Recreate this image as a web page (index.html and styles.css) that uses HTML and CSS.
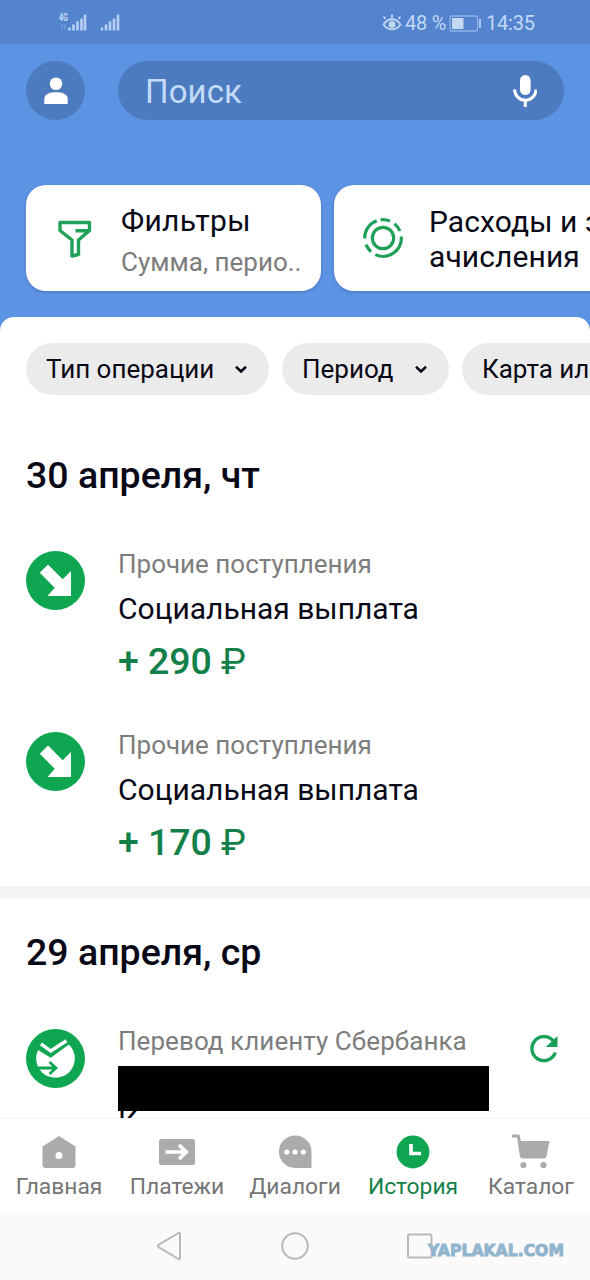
FILE: index.html
```html
<!DOCTYPE html>
<html lang="ru">
<head>
<meta charset="utf-8">
<title>История</title>
<link rel="stylesheet" href="styles.css">
</head>
<body>
<div class="phone">
  <div class="status">
    <svg class="signal" width="64" height="24" viewBox="0 0 64 24">
      <text class="net" x="1" y="10" textLength="9" lengthAdjust="spacingAndGlyphs">4G</text>
      <path class="dim" d="M4 13v5M7 13v5"/>
      <path d="M11.500 19.500v-3M15.500 19.500v-6M19.500 19.500v-9M23.500 19.500v-12M27 19.500v-16M44 19.500v-3M48 19.500v-6M52 19.500v-9M56 19.500v-12M60 19.500v-16"/>
    </svg>
    <div class="status-right">
      <svg class="eye" width="20" height="18" viewBox="0 0 20 18">
        <path d="M1.500 10.500C6 3.500 14 3.500 18.500 10.500C14 17 6 17 1.500 10.500ZM3.500 5L1.500 2.500M10 4V.5M16.500 5l2-2.500"/>
        <circle cx="10" cy="10.500" r="3.400"/>
      </svg>
      <span class="battery-text">48 %</span>
      <svg class="battery" width="34" height="17" viewBox="0 0 34 17">
        <rect class="case" x="1" y="1" width="27.500" height="15" rx="1.500"/>
        <rect class="charge" x="3" y="3" width="11.500" height="11"/>
        <path class="cap" d="M31 4v9"/>
      </svg>
      <span class="time">14:35</span>
    </div>
  </div>

  <div class="search-row">
    <div class="avatar">
      <svg width="24" height="28" viewBox="0 0 24 28"><circle cx="12" cy="6.800" r="6.300"/><path d="M.3 27V22C.3 17 6 15.300 12 15.300S23.700 17 23.700 22v5Z"/></svg>
    </div>
    <div class="search">
      <span class="placeholder">Поиск</span>
      <svg width="24" height="34" viewBox="0 0 24 34"><rect x="7" y="1" width="10.600" height="20" rx="5.300"/><path class="stand" d="M1.600 15.500a10.700 10.700 0 0 0 21.400 0M12.300 26v7"/></svg>
    </div>
  </div>

  <div class="cards">
    <div class="card card-filter">
      <svg width="34" height="38" viewBox="0 0 34 38"><path d="M2 2.500H31.500V10.500L20.500 20V34.500L14 36V20L2 10.500Z M31 10.800H17.500"/></svg>
      <div class="card-text">
        <div class="card-title">Фильтры</div>
        <div class="card-sub">Сумма, перио..</div>
      </div>
    </div>
    <div class="card card-spend">
      <svg width="42" height="42" viewBox="0 0 42 42">
        <circle cx="21" cy="21" r="10.700"/>
        <path d="M2.700 21.500A18.300 18.300 0 0 1 14.700 3.800M18.500 2.900A18.300 18.300 0 0 1 28 4.100M32.500 6.800A18.300 18.300 0 0 1 37.900 14M39.300 19.500A18.300 18.300 0 0 1 13.300 37.600M9 34.700A18.300 18.300 0 0 1 4 27.700"/>
      </svg>
      <div class="card-long"><span>Расходы и з</span><span>ачисления</span></div>
    </div>
  </div>

  <div class="sheet">
    <div class="chips">
      <div class="chip chip-a"><span>Тип операции</span><svg width="14" height="9" viewBox="0 0 14 9"><path d="M2 1.800l5 4.700 5-4.700"/></svg></div>
      <div class="chip chip-b"><span>Период</span><svg width="14" height="9" viewBox="0 0 14 9"><path d="M2 1.800l5 4.700 5-4.700"/></svg></div>
      <div class="chip chip-c"><span>Карта ил</span></div>
    </div>
    <h2 class="date date-first">30 апреля, чт</h2>
    <div class="item">
      <svg class="badge" width="59" height="59" viewBox="0 0 59 59"><circle cx="29.500" cy="29.500" r="29.500"/><path d="M22 13.500L36.700 28.200L45 20V45H21.500L28.700 36.700L13.800 21.800Z"/></svg>
      <div class="info">
        <div class="label">Прочие поступления</div>
        <div class="name">Социальная выплата</div>
        <div class="amount">+ 290 <span class="rub">₽</span></div>
      </div>
    </div>
    <div class="item">
      <svg class="badge" width="59" height="59" viewBox="0 0 59 59"><circle cx="29.500" cy="29.500" r="29.500"/><path d="M22 13.500L36.700 28.200L45 20V45H21.500L28.700 36.700L13.800 21.800Z"/></svg>
      <div class="info">
        <div class="label">Прочие поступления</div>
        <div class="name">Социальная выплата</div>
        <div class="amount">+ 170 <span class="rub">₽</span></div>
      </div>
    </div>
    <div class="divider"></div>
    <h2 class="date date-second">29 апреля, ср</h2>
    <div class="item item-last">
      <svg class="badge" width="59" height="59" viewBox="0 0 59 59">
        <circle cx="29.500" cy="29.500" r="29.500"/>
        <circle class="hole" cx="29.500" cy="29.500" r="19.300"/>
        <path class="fill-green" d="M14 8H44L46 13.200L24.700 28.800L8 18.500Z"/>
        <path class="tick" d="M15 14.800L24.700 22L40.500 11.800"/>
        <path class="arrow" d="M9 39H29.500M23.500 33L30 39L23.500 45"/>
      </svg>
      <div class="info">
        <div class="label t-client">Перевод клиенту Сбербанка</div>
        <div class="redacted"></div>
        <div class="clipped">К</div>
      </div>
      <svg class="repeat" width="28" height="28" viewBox="0 0 28 28"><path class="arc" d="M25.300 17.500A12 12 0 1 1 23.500 6.300"/><path class="head" d="M27.500 1V12H15.700Z"/></svg>
    </div>
  </div>

  <div class="tabs">
    <div class="tab"><svg width="36" height="36" viewBox="0 0 36 36"><path d="M18 2L34.500 12.500V31a3 3 0 0 1-3 3h-27a3 3 0 0 1-3-3V12.500Z"/><circle class="cut" cx="18" cy="21.500" r="3.500"/></svg><span>Главная</span></div>
    <div class="tab"><svg width="36" height="36" viewBox="0 0 36 36"><rect x="0" y="5" width="36" height="26" rx="2.500"/><path class="line" d="M6.500 18H27M20 11L27.300 18L20 25"/></svg><span>Платежи</span></div>
    <div class="tab"><svg width="36" height="36" viewBox="0 0 36 36"><path d="M34.500 34H18A16.300 16.300 0 1 1 34.500 17.700Z"/><g class="cut"><circle cx="9.800" cy="18" r="2.600"/><circle cx="18" cy="18" r="2.600"/><circle cx="26.300" cy="18" r="2.600"/></g></svg><span>Диалоги</span></div>
    <div class="tab active"><svg width="36" height="36" viewBox="0 0 36 36"><circle cx="18" cy="18" r="16.400"/><path class="line" d="M16 10V19.500H26"/></svg><span>История</span></div>
    <div class="tab"><svg width="40" height="36" viewBox="0 0 40 36"><path d="M1 .500H8.500L9.800 7H38.500L35.500 22.500a3 3 0 0 1-2.600 2H11.500a2.500 2.500 0 0 1-2.500-2L6 3.500H1Z"/><circle cx="12.500" cy="31" r="3.100"/><circle cx="32.500" cy="31" r="3.100"/></svg><span>Каталог</span></div>
  </div>
  <div class="navbar">
    <svg width="26" height="28" viewBox="0 0 26 28"><path d="M24 1.500V26.500a1 1 0 0 1-1.500.500L2.500 15.200a1.400 1.400 0 0 1 0-2.300L22.500 1a1 1 0 0 1 1.500.5Z"/></svg>
    <svg width="28" height="28" viewBox="0 0 28 28"><circle cx="14" cy="14" r="12.800"/></svg>
    <svg width="26" height="26" viewBox="0 0 26 26"><rect x="1" y="1.500" width="23.500" height="23" rx="1.500"/></svg>
  </div>
  <svg class="watermark" width="142" height="20" viewBox="0 0 142 20"><text x="4" y="15.500" textLength="136" lengthAdjust="spacingAndGlyphs">YAPLAKAL.COM</text></svg>
</div>
</body>
</html>
```
FILE: styles.css
```css
* { box-sizing: border-box; }
body { margin: 0; font-family: Roboto, "Noto Sans", sans-serif; color: #080816; background: #fff; }
svg { display: block; flex: none; fill: none; }
.phone { position: relative; width: 590px; height: 1280px; overflow: hidden; display: flex; flex-direction: column; background: #5d93e3; white-space: nowrap; }
.status { flex: none; height: 44px; padding: 11px 56px 0 58px; display: flex; justify-content: space-between; background: #5384cd; color: #c3d8f5; }
.signal { stroke: #b7d0f3; stroke-width: 2.600; }
.signal .net { fill: #c3d8f5; stroke: none; font-size: 10px; font-weight: 700; }
.signal .dim { stroke: #7199dc; stroke-width: 1.500; }
.status-right { display: flex; align-items: center; height: 24px; font-size: 20px; line-height: 24px; letter-spacing: -.2px; }
.eye { margin-right: 3px; stroke: #c3d8f5; stroke-width: 1.800; }
.eye circle { fill: #c3d8f5; stroke: none; }
.battery-text { width: 44px; }
.battery .case { stroke: #8fb2e8; stroke-width: 1.300; }
.battery .charge { fill: #c3d8f5; }
.battery .cap { stroke: #a9c5ef; stroke-width: 2; }
.time { margin-left: 3px; width: 48px; }

.search-row { flex: none; display: flex; gap: 33px; padding: 17px 26px 0; }
.avatar { width: 59px; height: 59px; border-radius: 50%; background: #4d7bbf; display: flex; align-items: center; justify-content: center; }
.avatar svg { fill: #fff; }
.search { flex: 1; height: 59px; border-radius: 30px; background: #4d7bbf; display: flex; align-items: center; justify-content: space-between; padding: 2px 27px 0 27px; }
.placeholder { color: #c3daf8; font-size: 33px; letter-spacing: .1px; }
.search svg { fill: #fff; margin-top: -2px; }
.search .stand { fill: none; stroke: #fff; stroke-width: 3; }

.cards { flex: none; display: flex; gap: 13px; padding: 65px 0 0 26px; }
.card { flex: none; height: 106px; border-radius: 20px; background: #fff; display: flex; align-items: center; box-shadow: 0 1px 3px rgba(30,60,120,.35); }
.card-filter { width: 295px; padding: 0 0 0 32px; }
.card-filter svg { stroke: #21a058; stroke-width: 3.400; stroke-linejoin: round; margin-top: 2px; }
.card-text { margin-left: 29px; padding-top: 6px; }
.card-title { font-size: 30px; line-height: 41px; letter-spacing: .3px; }
.card-sub { font-size: 26px; line-height: 42px; color: #7c7c7c; }
.card-spend { width: 400px; padding-left: 28px; }
.card-spend svg { stroke: #21a058; stroke-width: 3.200; }
.card-long { margin-left: 25px; padding-top: 1px; font-size: 30px; line-height: 35px; letter-spacing: .1px; display: flex; flex-direction: column; align-items: flex-start; }

.sheet { flex: none; height: 801px; margin-top: 26px; border-radius: 14px 14px 0 0; background: #fff; overflow: hidden; }
.chips { display: flex; gap: 13px; padding: 26px 0 0 26px; }
.chip { flex: none; height: 52px; border-radius: 26px; background: #ebebeb; display: flex; align-items: center; justify-content: space-between; padding: 0 21px 0 20px; font-size: 26px; }
.chip svg { stroke: #080816; stroke-width: 2.600; }
.chip-a { width: 243px; }
.chip-b { width: 167px; }
.chip-c { width: 240px; }
.date { margin: 0; padding-left: 26px; font-size: 37.500px; font-weight: 500; line-height: 50px; }
.date-first { margin-top: 55px; }
.item { display: flex; padding: 51px 0 0 26px; height: 180.500px; }
.badge { fill: #0fa651; }
.badge path { fill: #fff; }
.badge .hole { fill: #fff; }
.badge .fill-green { fill: #0fa651; }
.badge .tick { fill: none; stroke: #fff; stroke-width: 3.400; }
.badge .arrow { fill: none; stroke: #0fa651; stroke-width: 2.800; }
.info { margin-left: 33px; width: 371px; }
.label { margin-top: 1px; font-size: 26px; line-height: 25px; color: #7d7d7d; }
.name { font-size: 30px; line-height: 40px; margin-top: 12px; }
.amount { font-size: 37.500px; line-height: 50px; margin-top: 7px; font-weight: 500; color: #13804a; letter-spacing: -.05px; }
.rub { font-weight: 400; }
.divider { height: 13px; margin-top: 25px; background: #f4f4f4; }
.date-second { margin-top: 28px; }
.item-last { padding-top: 52px; }
.t-client { margin-top: 0; letter-spacing: .06px; }
.redacted { height: 45px; margin-top: 12px; background: #000; }
.clipped { height: 7px; overflow: hidden; font-size: 30px; line-height: 22px; }
.repeat { margin: 6px 0 0 41px; }
.repeat .arc { stroke: #18a058; stroke-width: 3.400; }
.repeat .head { fill: #18a058; }

.tabs { flex: none; height: 95px; display: grid; grid-template-columns: repeat(5, 118px); background: #fff; border-top: 1px solid #f4f4f4; }
.tab { display: flex; flex-direction: column; align-items: center; padding-top: 15px; font-size: 22.800px; line-height: 33px; color: #757575; }
.tab svg { fill: #ababab; }
.tab .cut { fill: #fff; }
.tab .line { fill: none; stroke: #fff; stroke-width: 3.600; }
.tab.active { color: #13804a; }
.tab.active svg { fill: #0fa651; }
.navbar { flex: none; height: 67px; padding: 2px 157px 4px 156px; display: flex; align-items: center; justify-content: space-between; background: #fafafa; }
.navbar svg { stroke: #b9b9b9; stroke-width: 2; }
.watermark { position: absolute; left: 424px; top: 1240px; }
.watermark text { font-family: "DejaVu Sans", sans-serif; font-weight: 700; font-size: 15px; fill: #91b5ce; stroke: #91b5ce; stroke-width: .9; }
```
